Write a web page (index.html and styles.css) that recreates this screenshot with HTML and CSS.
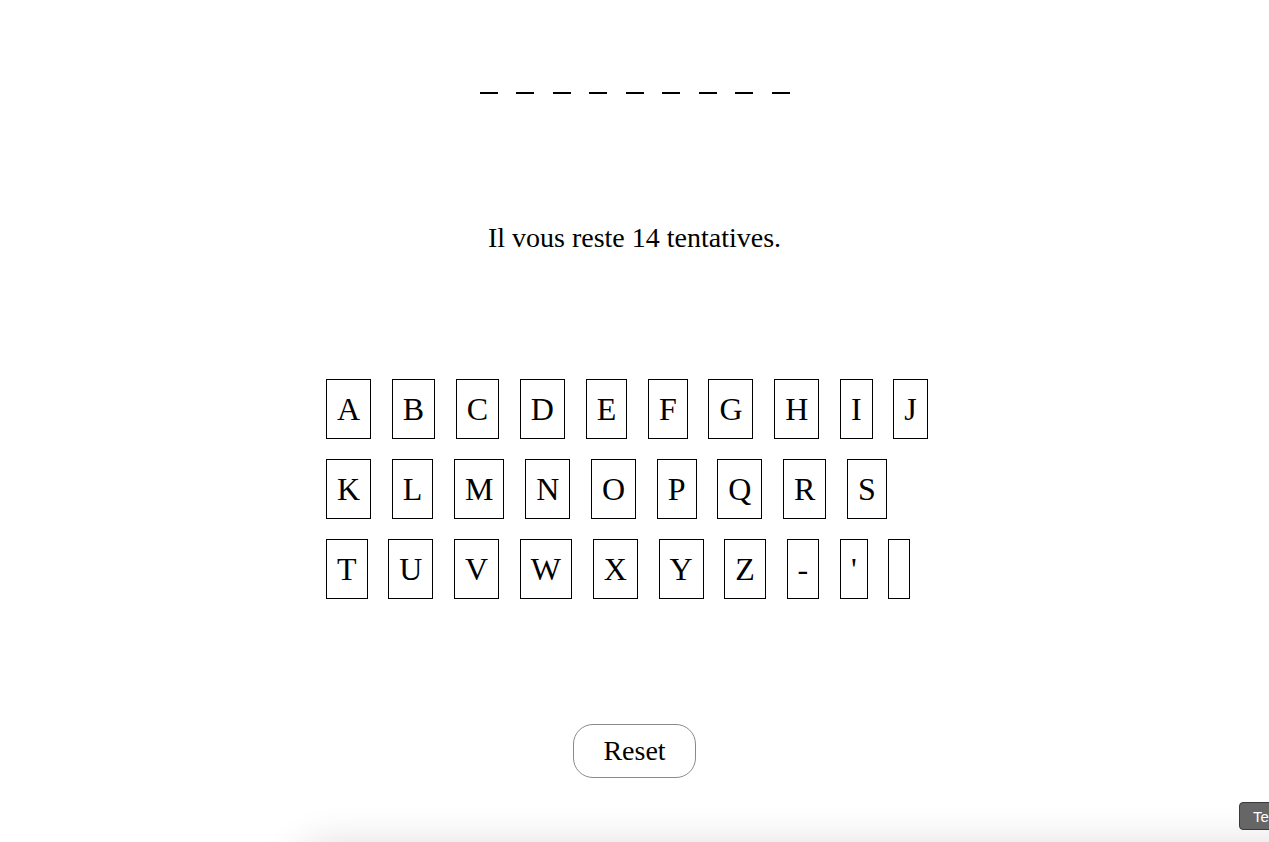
FILE: index.html
```html
<!DOCTYPE html>
<html lang="fr">
<head>
<meta charset="utf-8">
<title>Pendu</title>
<link rel="stylesheet" href="styles.css">
</head>
<body>
<main class="game">
  <div class="word">
    <span class="dash"></span><span class="dash"></span><span class="dash"></span>
    <span class="dash"></span><span class="dash"></span><span class="dash"></span>
    <span class="dash"></span><span class="dash"></span><span class="dash"></span>
  </div>
  <p class="message">Il vous reste 14 tentatives.</p>
  <div class="keyboard">
    <div class="row">
      <button class="key">A</button><button class="key">B</button><button class="key">C</button><button class="key">D</button><button class="key">E</button><button class="key">F</button><button class="key">G</button><button class="key">H</button><button class="key">I</button><button class="key">J</button>
    </div>
    <div class="row">
      <button class="key">K</button><button class="key">L</button><button class="key">M</button><button class="key">N</button><button class="key">O</button><button class="key">P</button><button class="key">Q</button><button class="key">R</button><button class="key">S</button>
    </div>
    <div class="row">
      <button class="key">T</button><button class="key">U</button><button class="key">V</button><button class="key">W</button><button class="key">X</button><button class="key">Y</button><button class="key">Z</button><button class="key">-</button><button class="key">'</button><button class="key"></button>
    </div>
  </div>
  <div class="actions">
    <button class="reset">Reset</button>
  </div>
</main>
<div class="bottom-shadow"></div>
<button class="test-btn">Test</button>
</body>
</html>
```

FILE: styles.css
```css
html, body {
  margin: 0;
  padding: 0;
  background: #fff;
  height: 100%;
  overflow: hidden;
}
body {
  font-family: "Liberation Serif", "Times New Roman", serif;
  color: #000;
}
.game {
  display: flex;
  flex-direction: column;
  align-items: center;
}
.word {
  display: flex;
  justify-content: center;
  gap: 18.5px;
  padding-top: 91.5px;
}
.dash {
  display: block;
  width: 18px;
  height: 2px;
  background: #000;
}
.message {
  margin: 128px 0 0;
  font-size: 28px;
  line-height: 32px;
  text-align: center;
}
.keyboard {
  margin-top: 125.5px;
  width: 617px;
  display: flex;
  flex-direction: column;
  gap: 20px;
}
.row {
  display: flex;
  gap: 20.7px;
}
.key {
  box-sizing: border-box;
  height: 60px;
  min-width: 22px;
  padding: 0 10px;
  border: 1px solid #000;
  border-radius: 0;
  background: #fff;
  color: #000;
  font-family: "Liberation Serif", "Times New Roman", serif;
  font-size: 32px;
  display: flex;
  align-items: center;
  justify-content: center;
}
.actions {
  margin-top: 125.2px;
}
.reset {
  box-sizing: border-box;
  height: 54px;
  width: 123px;
  border: 1px solid #8a8a8a;
  border-radius: 20px;
  background: #fff;
  color: #000;
  font-family: "Liberation Serif", "Times New Roman", serif;
  font-size: 28px;
  padding: 0;
}
.bottom-shadow {
  position: fixed;
  left: 300px;
  right: -60px;
  top: 852px;
  height: 60px;
  border-radius: 40px;
  box-shadow: 0 0 40px 8px rgba(0, 0, 0, 0.14);
}
.test-btn {
  position: fixed;
  left: 1239px;
  top: 802px;
  height: 28px;
  width: 70px;
  padding: 0 0 0 13px;
  text-align: left;
  background: #666;
  color: #fff;
  border: 1px solid #3a3a3a;
  border-radius: 4px;
  font-family: "Liberation Sans", Arial, sans-serif;
  font-size: 15px;
}
```
